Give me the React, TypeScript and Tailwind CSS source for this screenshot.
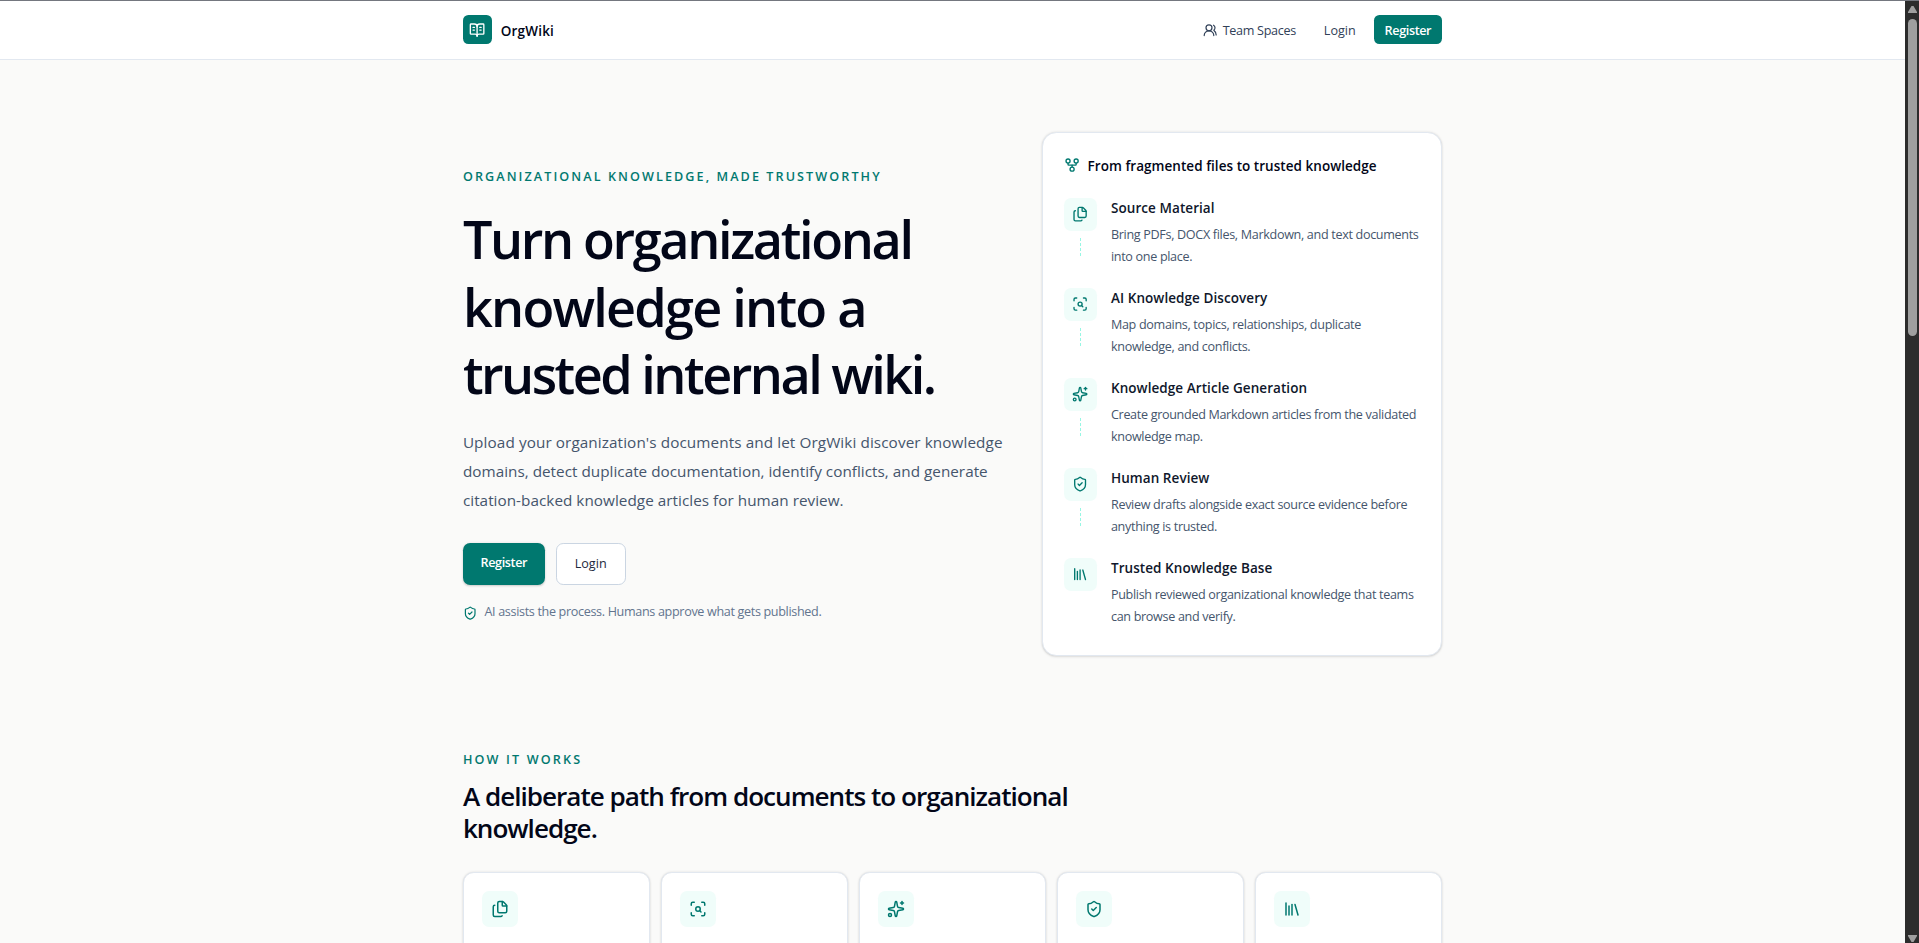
import {
  BookOpenText,
  Files,
  GitFork,
  Library,
  ScanSearch,
  ShieldCheck,
  Sparkles,
  UsersRound,
} from 'lucide-react';

const steps = [
  {
    icon: Files,
    title: 'Source Material',
    lines: ['Bring PDFs, DOCX files, Markdown, and text documents', 'into one place.'],
  },
  {
    icon: ScanSearch,
    title: 'AI Knowledge Discovery',
    lines: ['Map domains, topics, relationships, duplicate', 'knowledge, and conflicts.'],
  },
  {
    icon: Sparkles,
    title: 'Knowledge Article Generation',
    lines: ['Create grounded Markdown articles from the validated', 'knowledge map.'],
  },
  {
    icon: ShieldCheck,
    title: 'Human Review',
    lines: ['Review drafts alongside exact source evidence before', 'anything is trusted.'],
  },
  {
    icon: Library,
    title: 'Trusted Knowledge Base',
    lines: ['Publish reviewed organizational knowledge that teams', 'can browse and verify.'],
  },
];

function Header() {
  return (
    <header className="border-b border-slate-200 bg-white">
      <div className="mx-auto flex h-16 max-w-6xl items-center justify-between px-8">
        <a href="#" className="flex items-center gap-2.5">
          <span className="grid size-8 place-items-center rounded-md bg-teal-700 text-white">
            <BookOpenText className="size-[18px]" />
          </span>
          <span className="pt-0.5 text-[15px] font-semibold tracking-[0.015em] text-slate-950">
            OrgWiki
          </span>
        </a>
        <nav className="flex items-center text-[14px] font-medium tracking-[-0.025em] text-slate-700">
          <a href="#" className="mr-[31px] flex items-center gap-1.5">
            <UsersRound className="size-4" />
            <span className="pt-[3px]">Team Spaces</span>
          </a>
          <a href="#" className="mr-5 pt-[3px] tracking-normal">
            Login
          </a>
          <a
            href="#"
            className="flex h-8 w-[76px] items-center justify-center rounded-md bg-teal-700 pt-[3px] font-semibold tracking-[-0.03em] text-white"
          >
            Register
          </a>
        </nav>
      </div>
    </header>
  );
}

function Workflow() {
  return (
    <div className="rounded-2xl border border-slate-200 bg-white p-6 shadow-sm">
      <div className="flex h-6 items-center gap-2">
        <GitFork className="size-[18px] text-teal-700" />
        <h2 className="pt-0.5 text-[15px] font-semibold tracking-[0.003em] text-slate-950">
          From fragmented files to trusted knowledge
        </h2>
      </div>
      <ol className="mt-[25px]">
        {steps.map(({ icon: Icon, title, lines }) => (
          <li key={title} className="group flex h-[100px] gap-4 last:h-[83px]">
            <div className="flex flex-col items-center">
              <span className="grid size-9 place-items-center rounded-lg bg-teal-50 text-teal-700">
                <Icon className="size-[18px]" />
              </span>
              <span className="mt-2 h-5 border-l border-dashed border-teal-200 group-last:hidden" />
            </div>
            <div>
              <h3 className="text-[15px] leading-6 font-semibold tracking-[0.005em] text-slate-900">
                {title}
              </h3>
              <p className="mt-[5px] text-[14px] leading-6 tracking-[-0.026em] whitespace-nowrap text-slate-600">
                {lines[0]}
                <br />
                {lines[1]}
              </p>
            </div>
          </li>
        ))}
      </ol>
    </div>
  );
}

function Hero() {
  return (
    <section className="mx-auto grid max-w-6xl grid-cols-[603px_445px] items-center gap-10 px-8 py-20">
      <div className="pt-1">
        <p className="text-[14px] font-semibold tracking-[0.165em] text-teal-700 uppercase">
          Organizational knowledge, made trustworthy
        </p>
        <h1 className="mt-5 text-[58px] leading-[75px] font-semibold whitespace-nowrap text-slate-950">
          <span className="block tracking-[-0.045em]">Turn organizational</span>
          <span className="block tracking-[-0.034em]">knowledge into a</span>
          <span className="block tracking-[-0.048em]">trusted internal wiki.</span>
        </h1>
        <p className="mt-[23px] text-[17px] leading-8 whitespace-nowrap text-slate-600">
          <span className="tracking-[0.006em]">
            Upload your organization's documents and let OrgWiki discover knowledge
          </span>
          <br />
          <span className="tracking-[0.001em]">
            domains, detect duplicate documentation, identify conflicts, and generate
          </span>
          <br />
          <span className="tracking-[0.002em]">
            citation-backed knowledge articles for human review.
          </span>
        </p>
        <div className="mt-[31px] flex gap-3 text-[14px]">
          <a
            href="#"
            className="flex h-[46.5px] w-[91px] items-center justify-center rounded-lg bg-teal-700 font-semibold tracking-[-0.03em] text-white shadow-sm"
          >
            Register
          </a>
          <a
            href="#"
            className="flex h-[46.5px] w-[78px] items-center justify-center rounded-lg border border-slate-300 bg-white pt-0.5 font-medium text-slate-800"
          >
            Login
          </a>
        </div>
        <p className="mt-[21px] flex items-center gap-2 text-[14px] tracking-[-0.027em] text-slate-500">
          <ShieldCheck className="size-4 text-teal-700" />
          AI assists the process. Humans approve what gets published.
        </p>
      </div>
      <Workflow />
    </section>
  );
}

function HowItWorks() {
  return (
    <section className="mx-auto max-w-6xl px-8 pt-[26px]">
      <p className="text-[14px] font-semibold tracking-[0.17em] text-teal-700 uppercase">
        How it works
      </p>
      <h2 className="mt-[11px] text-[29px] leading-[36px] font-semibold tracking-[-0.038em] whitespace-nowrap text-slate-950">
        A deliberate path from documents to organizational
        <br />
        knowledge.
      </h2>
      <div className="mt-[31px] grid grid-cols-5 gap-3">
        {steps.map(({ icon: Icon, title }) => (
          <div key={title} className="h-60 rounded-xl border border-slate-200 bg-white p-5 shadow-sm">
            <span className="grid size-10 place-items-center rounded-lg bg-teal-50 text-teal-700">
              <Icon className="size-5" />
            </span>
          </div>
        ))}
      </div>
    </section>
  );
}

function Scrollbar() {
  return (
    <div className="flex w-3.5 flex-col items-center justify-between bg-[#2c2c2c] text-[#9f9f9f]">
      <div className="flex flex-col items-center">
        <svg viewBox="0 0 9 7" className="mt-[5px] h-[7px] w-[9px]" fill="currentColor">
          <path d="M3.5 0h2L9 6v1H0V6z" />
        </svg>
        <span className="mt-1.5 h-[317px] w-[9px] rounded-full bg-[#9f9f9f]" />
      </div>
      <svg viewBox="0 0 9 7" className="mb-px h-[7px] w-[9px]" fill="currentColor">
        <path d="M3.5 7h2L9 1V0H0v1z" />
      </svg>
    </div>
  );
}

export default function App() {
  return (
    <div className="flex h-[943px] overflow-hidden border-t border-[#74777f] bg-[#fafaf9] font-['Open_Sans','Noto_Sans',sans-serif]">
      <div className="min-w-0 flex-1 overflow-hidden">
        <div className="[zoom:0.9]">
          <Header />
          <main>
            <Hero />
            <HowItWorks />
          </main>
        </div>
      </div>
      <Scrollbar />
    </div>
  );
}
